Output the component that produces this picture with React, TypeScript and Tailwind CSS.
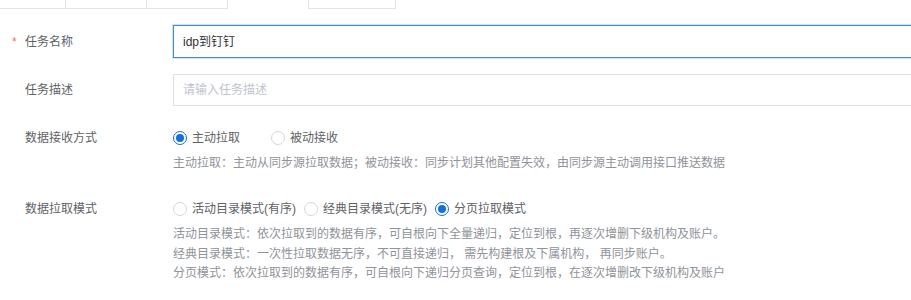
import React from "react";

const font = { fontFamily: '"Liberation Sans", "Noto Sans CJK SC", sans-serif' };

function Radio({ label, checked }: { label: string; checked?: boolean }) {
  return (
    <label className="flex items-center gap-[5px] text-[12px] text-[#606266]">
      {checked ? (
        <span className="flex h-[14px] w-[14px] items-center justify-center rounded-full border border-[#1570d6] bg-white">
          <span className="h-[8px] w-[8px] rounded-full bg-[#1570d6]" />
        </span>
      ) : (
        <span className="h-[14px] w-[14px] rounded-full border border-[#d4d7de] bg-white" />
      )}
      <span>{label}</span>
    </label>
  );
}

function Row({
  label,
  required,
  children,
  className = "",
}: {
  label: string;
  required?: boolean;
  children: React.ReactNode;
  className?: string;
}) {
  return (
    <div className={`flex ${className}`}>
      <div className="relative w-[173px] shrink-0 pl-[25px] text-[12px] text-[#606266]">
        {required && <span className="absolute left-[12px] text-[#f56c6c]">*</span>}
        {label}
      </div>
      <div className="min-w-0 flex-1">{children}</div>
    </div>
  );
}

export default function App() {
  return (
    <div className="h-[300px] w-[911px] overflow-hidden bg-white" style={font}>
      {/* tab strip, top cut off */}
      <div className="flex h-[9px]">
        <div className="w-[66px] border-b border-r border-[#e4e4e4]" />
        <div className="w-[81px] border-b border-r border-[#e4e4e4]" />
        <div className="w-[81px] border-b border-r border-[#e4e4e4]" />
        <div className="w-[81px] border-r border-[#e4e4e4]" />
        <div className="w-[87px] border-b border-r border-[#e4e4e4]" />
      </div>

      <Row label="任务名称" required className="mt-[16px] items-center">
        <div className="-mr-[20px] flex h-[33px] items-center border border-[#3a8ee6] pl-[9px] text-[12px] text-[#303133] shadow-[0_0_0_1px_#cfe3f7]">
          idp到钉钉
        </div>
      </Row>

      <Row label="任务描述" className="mt-[16px] items-center">
        <div className="-mr-[20px] flex h-[32px] items-center border border-[#dcdfe6] pl-[9px] text-[12px] text-[#c0c4cc]">
          请输入任务描述
        </div>
      </Row>

      <Row label="数据接收方式" className="mt-[23px]">
        <div className="flex h-[17px] items-center gap-[31px]">
          <Radio label="主动拉取" checked />
          <Radio label="被动接收" />
        </div>
        <p className="mt-[8px] text-[12px] leading-[19px] text-[#909399]">
          主动拉取：主动从同步源拉取数据；被动接收：同步计划其他配置失效，由同步源主动调用接口推送数据
        </p>
      </Row>

      <Row label="数据拉取模式" className="mt-[27px]">
        <div className="flex h-[17px] items-center gap-[8px]">
          <Radio label="活动目录模式(有序)" />
          <Radio label="经典目录模式(无序)" />
          <Radio label="分页拉取模式" checked />
        </div>
        <div className="mt-[8px] text-[12px] leading-[19.5px] text-[#909399]">
          <p>活动目录模式：依次拉取到的数据有序，可自根向下全量递归，定位到根，再逐次增删下级机构及账户。</p>
          <p>经典目录模式：一次性拉取数据无序，不可直接递归， 需先构建根及下属机构， 再同步账户。</p>
          <p>分页模式：依次拉取到的数据有序，可自根向下递归分页查询，定位到根，在逐次增删改下级机构及账户</p>
        </div>
      </Row>
    </div>
  );
}
